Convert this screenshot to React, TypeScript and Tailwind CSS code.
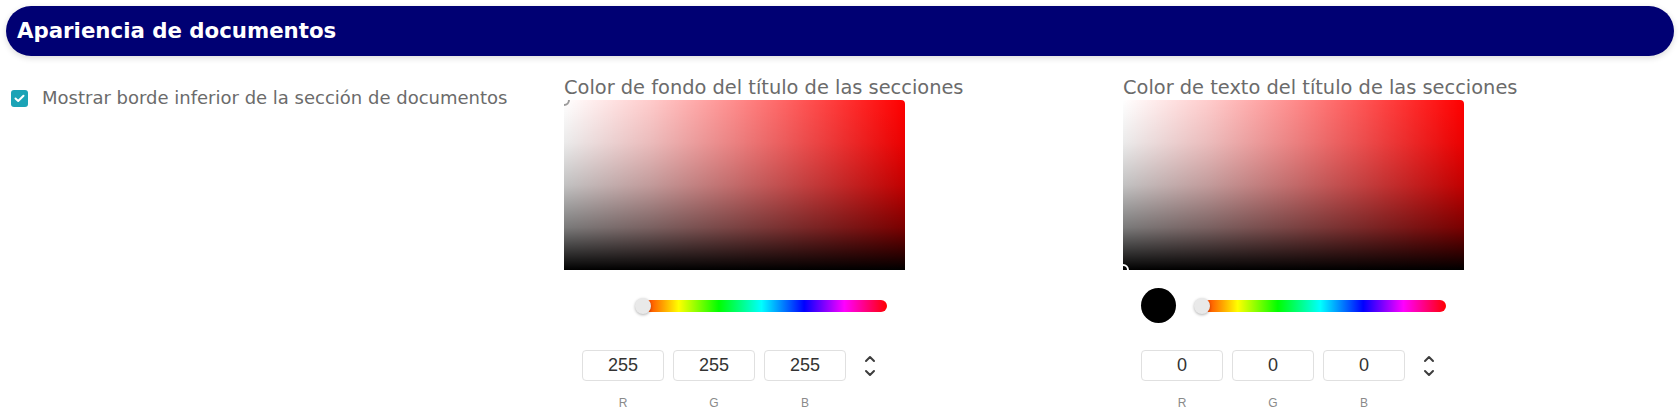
import React, { useState } from "react";

type Rgb = { r: number; g: number; b: number };

function Toggle() {
  return (
    <svg width="12" height="24" viewBox="0 0 12 24" fill="none" stroke="#3d3d3d" strokeWidth="2" strokeLinecap="round" strokeLinejoin="round">
      <path d="M2 7 L6 3 L10 7" />
      <path d="M2 17 L6 21 L10 17" />
    </svg>
  );
}

function Picker({ label, value, pointer }: { label: string; value: Rgb; pointer: "tl" | "bl" }) {
  const swatch = `rgb(${value.r}, ${value.g}, ${value.b})`;
  return (
    <div className="w-[341px]">
      <div className="text-[19.4px] leading-[24px] text-[#6b6b6b] whitespace-nowrap">{label}</div>
      {/* saturation area */}
      <div className="relative h-[170px] rounded-tr-[4px] overflow-hidden bg-[#ff0000]">
        <div className="absolute inset-0 bg-[linear-gradient(to_right,rgba(255,255,255,1)_0%,rgba(255,255,255,0.8)_25%,rgba(255,255,255,0.55)_50%,rgba(255,255,255,0.28)_75%,rgba(255,255,255,0)_100%)]" />
        <div className="absolute inset-0 bg-[linear-gradient(to_bottom,rgba(0,0,0,0)_0%,rgba(0,0,0,0.08)_25%,rgba(0,0,0,0.24)_50%,rgba(0,0,0,0.52)_75%,rgba(0,0,0,1)_100%)]" />
        {pointer === "tl" ? (
          <div className="absolute -left-[6px] -top-[6px] w-[12px] h-[12px] rounded-full border-2 border-[#9a9a9a]" />
        ) : (
          <div className="absolute -left-[6px] -bottom-[6px] w-[12px] h-[12px] rounded-full border-2 border-white" />
        )}
      </div>
      <div className="pt-[18px] px-[18px]">
        <div className="flex items-center gap-[19px]">
          <div className="w-[35px] h-[35px] rounded-full shrink-0" style={{ background: swatch }} />
          <div className="relative flex-1 h-[12px] rounded-full bg-[linear-gradient(to_right,#f00_0%,#ff0_17%,#0f0_33%,#0ff_50%,#00f_67%,#f0f_83%,#f00_100%)]">
            <div className="absolute -left-[1px] top-1/2 -translate-y-1/2 w-[16px] h-[16px] rounded-full bg-[#e9e9e9] shadow-[0_1px_3px_rgba(0,0,0,0.3)]" />
          </div>
        </div>
        <div className="flex items-start mt-[27px]">
          <div className="flex gap-[9px]">
            {(["r", "g", "b"] as const).map((k) => (
              <div key={k} className="w-[82px] flex flex-col items-center">
                <input
                  readOnly
                  value={value[k]}
                  className="w-full h-[31px] rounded-[4px] border border-[#e0e0e0] text-center text-[18px] text-[#333] font-['Liberation_Sans',sans-serif] outline-none"
                />
                <span className="mt-[14px] text-[12px] leading-[16px] text-[#8a8a8a] uppercase font-['Liberation_Sans',sans-serif]">{k}</span>
              </div>
            ))}
          </div>
          <div className="ml-[18px] h-[31px] flex items-center">
            <Toggle />
          </div>
        </div>
      </div>
    </div>
  );
}

export default function App() {
  const [bordeInferior, setBordeInferior] = useState(true);

  return (
    <div className="w-[1680px] h-[417px] bg-white overflow-hidden font-['DejaVu_Sans',sans-serif]">
      <div className="mx-[6px] mt-[6px] h-[50px] rounded-full bg-[#000073] shadow-[0_2px_6px_rgba(0,0,0,0.15)] flex items-center px-[11px]">
        <h2 className="text-white text-[21.3px] font-bold">Apariencia de documentos</h2>
      </div>
      <div className="flex mt-[20px]">
        <div className="w-[564px] pl-[11px] pt-[10px]">
          <label className="flex items-center gap-[14px] cursor-pointer">
            <span
              className={
                "w-[17px] h-[17px] rounded-[3px] flex items-center justify-center " +
                (bordeInferior ? "bg-[#1ba3b6]" : "border border-gray-400 bg-white")
              }
            >
              {bordeInferior && (
                <svg width="11" height="9" viewBox="0 0 11 9" fill="none" stroke="white" strokeWidth="2" strokeLinecap="round" strokeLinejoin="round">
                  <path d="M1.5 4.5 L4.2 7 L9.5 1.8" />
                </svg>
              )}
            </span>
            <input
              type="checkbox"
              className="hidden"
              checked={bordeInferior}
              onChange={() => setBordeInferior(!bordeInferior)}
            />
            <span className="text-[18px] leading-[24px] text-[#6b6b6b]">Mostrar borde inferior de la sección de documentos</span>
          </label>
        </div>
        <Picker label="Color de fondo del título de las secciones" value={{ r: 255, g: 255, b: 255 }} pointer="tl" />
        <div className="ml-[218px]">
          <Picker label="Color de texto del título de las secciones" value={{ r: 0, g: 0, b: 0 }} pointer="bl" />
        </div>
      </div>
    </div>
  );
}
